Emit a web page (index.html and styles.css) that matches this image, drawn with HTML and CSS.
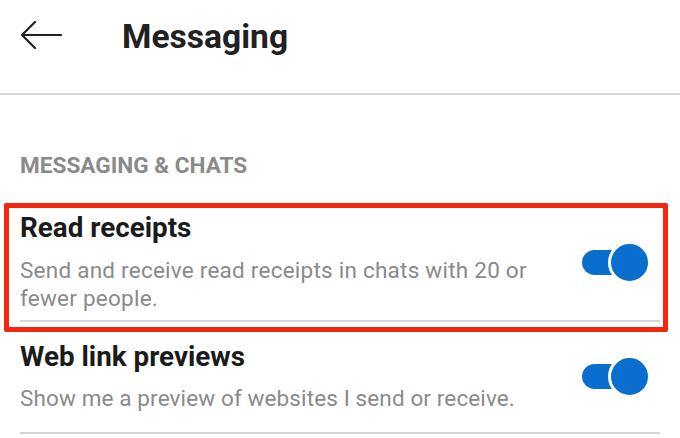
FILE: index.html
```html
<!DOCTYPE html>
<html lang="en">
<head>
    <meta charset="UTF-8">
    <title>Messaging</title>
    <meta name="viewport" content="width=device-width, initial-scale=1.0">
    <link rel="stylesheet" href="styles.css">
</head>
<body>
    <header class="topbar">
        <button class="back" aria-label="Back">
            <svg width="42" height="30" viewBox="0 0 42 30">
                <path d="M2 14 H41 M15 1 L2 14 L15 27" fill="none" stroke="#222" stroke-width="2.2" stroke-linecap="round" stroke-linejoin="round"/>
            </svg>
        </button>
        <h1 class="title">Messaging</h1>
    </header>

    <section class="settings">
        <h2 class="section-title">MESSAGING &amp; CHATS</h2>

        <div class="highlight">
            <div class="row row-first">
                <div class="row-text">
                    <h3>Read receipts</h3>
                    <p>Send and receive read receipts in chats with 20 or fewer people.</p>
                </div>
                <span class="toggle"><span class="track"></span><span class="thumb"></span></span>
            </div>
        </div>

        <div class="row row-second">
            <div class="row-text">
                <h3>Web link previews</h3>
                <p>Show me a preview of websites I send or receive.</p>
            </div>
            <span class="toggle"><span class="track"></span><span class="thumb"></span></span>
        </div>
    </section>
</body>
</html>
```

FILE: styles.css
```css
body {
    margin: 0;
    background: #fff;
    font-family: Roboto, "Noto Sans", sans-serif;
}

.topbar {
    display: flex;
    align-items: center;
    height: 74px;
    padding-bottom: 19px;
    border-bottom: 2px solid #d8d8d8;
}

.back {
    display: flex;
    background: none;
    border: none;
    padding: 0;
    margin: 0 0 2px 20px;
    cursor: pointer;
}

.title {
    margin: 0 0 0 60px;
    font-size: 33.6px;
    line-height: 40px;
    font-weight: 700;
    color: #212121;
}

.section-title {
    margin: 57px 0 0 20px;
    font-size: 22.6px;
    line-height: 28px;
    font-weight: 700;
    color: #8a8a8a;
}

.highlight {
    margin: 23px 12px 0 4px;
    padding: 4px 3px 5px 11px;
    border: 5px solid #f5250f;
    border-radius: 2px;
}

.row {
    display: flex;
    align-items: center;
    border-bottom: 2px solid #d4d4d4;
}

.row-first {
    padding-bottom: 8px;
}

.row-second {
    margin: 9px 20px 0;
    padding-bottom: 20px;
}

.row-text {
    flex: 1;
}

.row h3 {
    margin: 0;
    font-size: 27.8px;
    line-height: 32px;
    font-weight: 700;
    color: #1b1b1b;
}

.row p {
    margin: 12px 0 0;
    max-width: 525px;
    font-size: 22.5px;
    line-height: 28px;
    letter-spacing: 0.24px;
    color: #8a8a8a;
}

.row-second p {
    margin-top: 11px;
    letter-spacing: 0.12px;
}

.toggle {
    display: inline-flex;
    align-items: center;
    margin: 0 9px 0 20px;
}

.track {
    width: 36px;
    height: 25px;
    background: #0a6ecf;
    border-radius: 13px 0 0 13px;
}

.thumb {
    width: 37px;
    height: 37px;
    margin-left: -10px;
    border: 3px solid #fff;
    border-radius: 50%;
    background: #0a6ecf;
}
```
